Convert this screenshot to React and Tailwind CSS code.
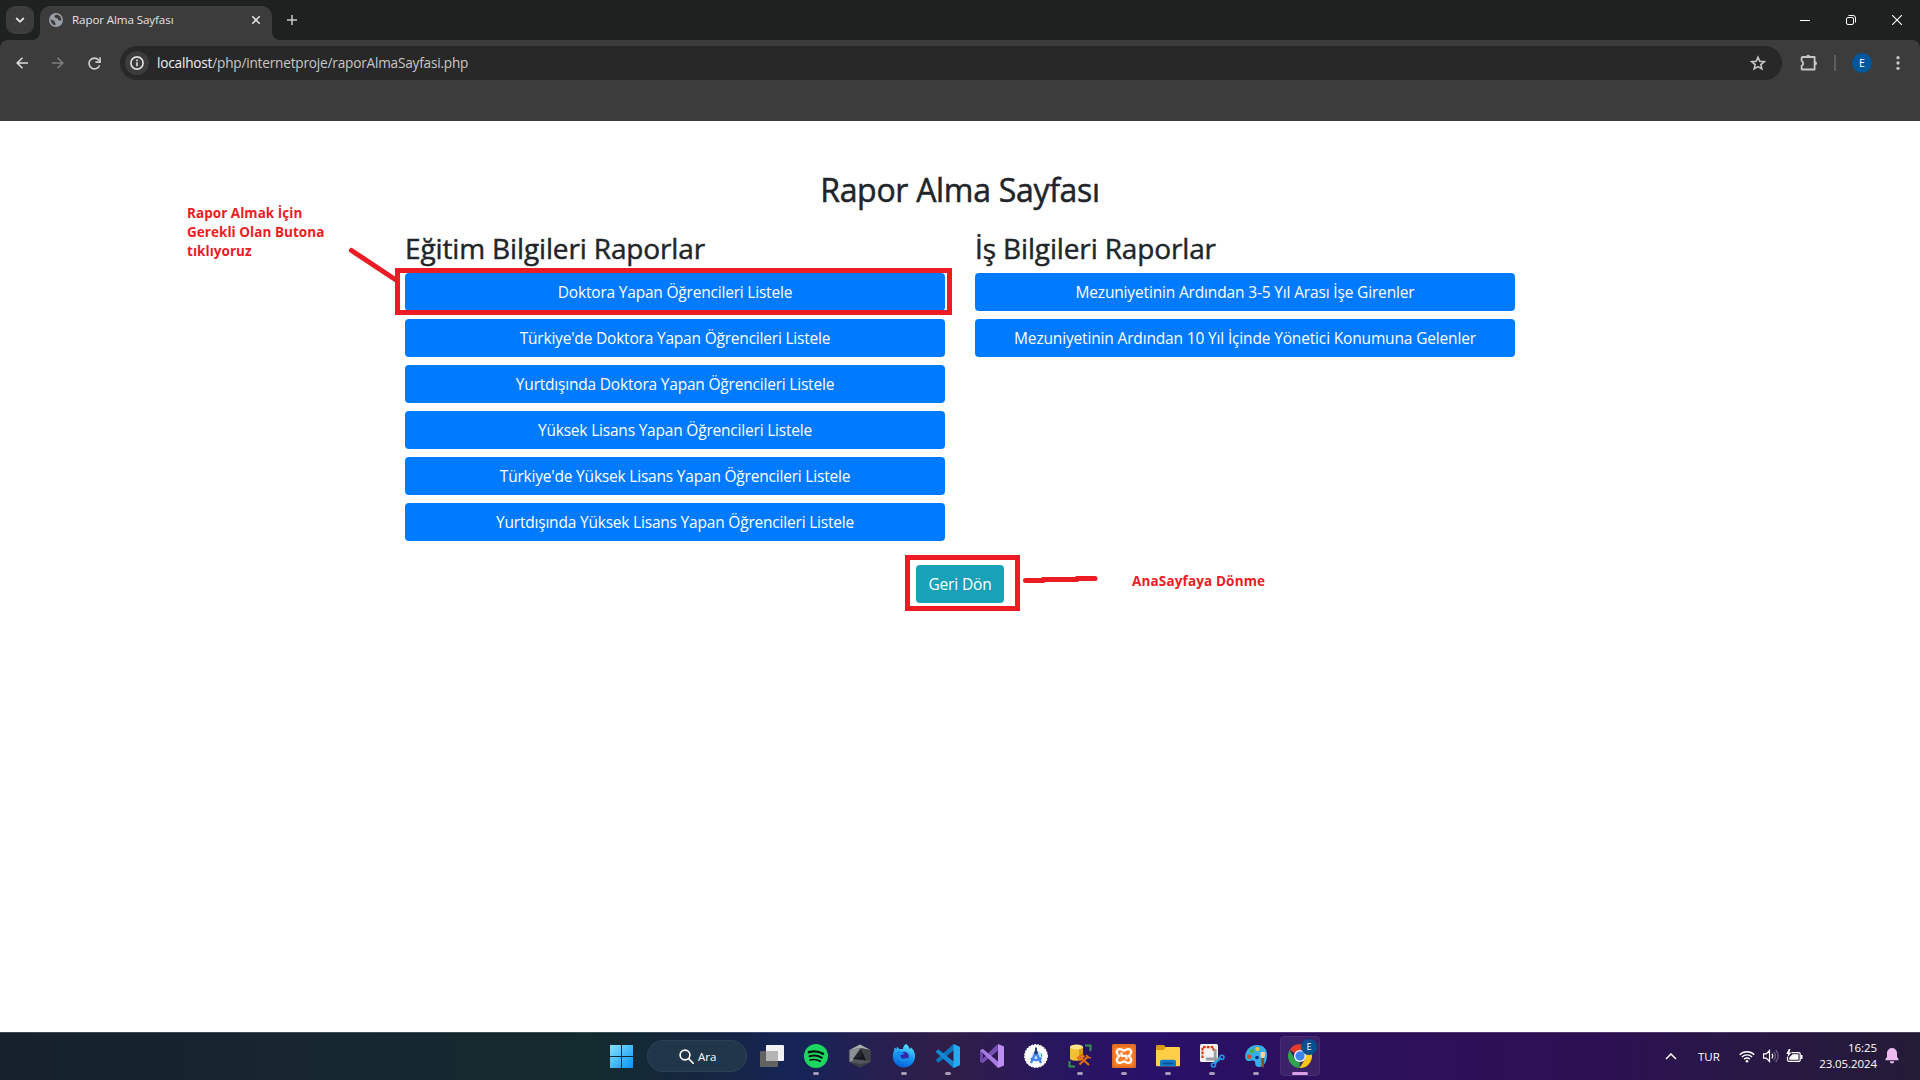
import React from 'react';

const educationReports = [
  'Doktora Yapan Öğrencileri Listele',
  "Türkiye'de Doktora Yapan Öğrencileri Listele",
  'Yurtdışında Doktora Yapan Öğrencileri Listele',
  'Yüksek Lisans Yapan Öğrencileri Listele',
  "Türkiye'de Yüksek Lisans Yapan Öğrencileri Listele",
  'Yurtdışında Yüksek Lisans Yapan Öğrencileri Listele',
];

const jobReports = [
  'Mezuniyetinin Ardından 3-5 Yıl Arası İşe Girenler',
  'Mezuniyetinin Ardından 10 Yıl İçinde Yönetici Konumuna Gelenler',
];

/* ---------- Browser chrome ---------- */

function TabStrip() {
  return (
    <div className="flex h-10 items-start bg-[#1f2120] pl-1.5 pt-1.5">
      <button className="flex size-7 items-center justify-center rounded-[9px] bg-[#3c3c3c]">
        <svg width="10" height="8" viewBox="0 0 10 8" fill="none" stroke="#e3e3e3" strokeWidth="1.8">
          <path d="M1.2 2 5 5.8 8.8 2" />
        </svg>
      </button>
      <div className="relative ml-1.5 flex h-[34px] w-[232px] items-center rounded-t-[10px] bg-[#3c3c3c] pb-1.5 pl-[9px] pr-2.5">
        <svg className="absolute -left-2 bottom-0" width="8" height="8" viewBox="0 0 8 8">
          <path d="M8 0v8H0A8 8 0 0 0 8 0Z" fill="#3c3c3c" />
        </svg>
        <svg className="absolute -right-2 bottom-0" width="8" height="8" viewBox="0 0 8 8">
          <path d="M0 0v8h8A8 8 0 0 1 0 0Z" fill="#3c3c3c" />
        </svg>
        <svg width="14" height="14" viewBox="0 0 14 14">
          <circle cx="7" cy="7" r="7" fill="#9aa0a8" />
          <path
            d="M1.6 6.2c1.2.9 2.6.9 3.6 1.500 1 .7.2 1.500.8 2 .8.6.6 1.300.4 2.600A5.500 5.500 0 0 1 1.600 6.200ZM7.600 1.500c-.9.7-2.200.7-2.300 1.600-.1.800.9.700.8 1.500 0 .8 1 .9 1.800.6.900-.3 1.200.5 1 1.100-.3.900.6 1.300 1.500 1.100.900-.2 1.300.4 2 .200A5.500 5.500 0 0 0 7.600 1.500Z"
            fill="#3c3c3c"
          />
        </svg>
        <span className="ml-[9px] flex-1 whitespace-nowrap text-[11.6px] leading-4 tracking-[-0.1px] text-[#e3e3e3]">
          Rapor Alma Sayfası
        </span>
        <svg width="12" height="12" viewBox="0 0 12 12" fill="none" stroke="#dedede" strokeWidth="1.600">
          <path d="m2.300 2.300 7.400 7.400M9.700 2.300 2.300 9.700" />
        </svg>
      </div>
      <svg className="ml-[15px] mt-[9px]" width="10" height="10" viewBox="0 0 10 10" fill="none" stroke="#c9c9c9" strokeWidth="1.500">
        <path d="M5 0v10M0 5h10" />
      </svg>
      <div className="ml-auto flex">
        <div className="flex h-7 w-[46px] items-center justify-center">
          <svg width="10" height="10" viewBox="0 0 10 10" stroke="#fff">
            <path d="M0 5.500h10" />
          </svg>
        </div>
        <div className="flex h-7 w-[46px] items-center justify-center">
          <svg width="10" height="10" viewBox="0 0 10 10" fill="none" stroke="#fff">
            <rect x=".5" y="2.500" width="7" height="7" rx="1.500" />
            <path d="M2.500.5h4.500a2.500 2.500 0 0 1 2.500 2.500v4.500" />
          </svg>
        </div>
        <div className="flex h-7 w-[46px] items-center justify-center">
          <svg width="10" height="10" viewBox="0 0 10 10" stroke="#fff" strokeWidth="1.100">
            <path d="m0 0 10 10M10 0 0 10" />
          </svg>
        </div>
      </div>
    </div>
  );
}

function Toolbar() {
  return (
    <div className="h-[81px] bg-[#1f2120]">
      <div className="flex h-full items-start rounded-t-lg bg-[#3c3c3c] pt-1.5">
        <div className="flex h-[34px] w-[120px] items-center pl-4">
          <svg width="12" height="12" viewBox="0 0 12 12" fill="none" stroke="#dcdcdc" strokeWidth="1.600">
            <path d="M12 6H1.500M6.500.700 1.200 6l5.300 5.300" />
          </svg>
          <svg className="ml-6" width="12" height="12" viewBox="0 0 12 12" fill="none" stroke="#7e7e7e" strokeWidth="1.600">
            <path d="M0 6h10.500M5.500.700 10.800 6l-5.300 5.300" />
          </svg>
          <svg className="ml-6" width="13" height="13" viewBox="0 0 13 13" fill="none" stroke="#cfcfcf" strokeWidth="1.600">
            <path d="M11.600 8.200A5.400 5.400 0 1 1 10.600 3L12 4.500" />
            <path d="M12.100.3v4.800H7.400" />
          </svg>
        </div>
        <div className="flex h-[34px] w-[1662px] items-center rounded-full bg-[#282828] pl-[5px] pr-4">
          <span className="flex size-6 items-center justify-center rounded-full bg-[#3c3c3c]">
            <svg width="14" height="14" viewBox="0 0 14 14" fill="none">
              <circle cx="7" cy="7" r="6.100" stroke="#e3e3e3" strokeWidth="1.600" />
              <path d="M7 6.300V10.300M7 3.600v1.600" stroke="#e3e3e3" strokeWidth="1.600" />
            </svg>
          </span>
          <span className="ml-2 flex-1 text-[13.6px] leading-5 tracking-[-0.19px] text-[#c7c7c7]">
            <span className="text-[#f0f0f0]">localhost</span>/php/internetproje/raporAlmaSayfasi.php
          </span>
          <svg width="16" height="16" viewBox="0 0 17 16" fill="none" stroke="#c7c7c7" strokeWidth="1.700">
            <path d="m8.500 1.900 1.900 4.300 4.700.4-3.600 3.100 1.100 4.600-4.100-2.500-4.100 2.500 1.100-4.600L1.900 6.600l4.700-.4Z" />
          </svg>
        </div>
        <div className="flex h-[34px] flex-1 items-center pl-[18px]">
          <svg width="18" height="18" viewBox="0 0 18 18" fill="none">
            <path
              d="M2.600 3h12v12.500H2a1 1 0 0 1-.4-.8v-2.800a2.700 2.700 0 0 0 0-4.900V4a1 1 0 0 1 1-1Z"
              stroke="#c7c7c7"
              strokeWidth="1.800"
              strokeLinejoin="round"
            />
            <path d="M6.200 2.800a2 2 0 0 1 4 0ZM15 7.200a2 2 0 0 1 0 4Z" fill="#c7c7c7" />
          </svg>
          <span className="ml-4 h-4 w-0.5 bg-[#5d5d5d]" />
          <span className="ml-4 flex size-5 items-center justify-center rounded-full bg-[#00579c] pt-px text-[10.500px] text-white">E</span>
          <svg className="ml-6" width="4" height="14" viewBox="0 0 4 14" fill="#c7c7c7">
            <circle cx="2" cy="1.700" r="1.650" />
            <circle cx="2" cy="7" r="1.650" />
            <circle cx="2" cy="12.300" r="1.650" />
          </svg>
        </div>
      </div>
    </div>
  );
}

/* ---------- Page content ---------- */

function ReportColumn({ title, reports, buttonTracking }) {
  return (
    <section className="flex w-[570px] flex-col px-[15px]">
      <h2 className="mb-2 text-[28px] leading-[34px] tracking-[-0.14px] text-[#212529] [-webkit-text-stroke:0.45px_#212529]">
        {title}
      </h2>
      <div className="flex flex-col gap-2">
        {reports.map((label) => (
          <button
            key={label}
            className={`h-[38px] rounded bg-[#007bff] text-[15.500px] leading-6 text-white ${buttonTracking}`}
          >
            {label}
          </button>
        ))}
      </div>
    </section>
  );
}

function Annotations() {
  return (
    <div className="pointer-events-none absolute inset-0 text-[13.500px] font-bold leading-[19px] tracking-[0.04px] text-[#ed1c24]">
      <div className="absolute left-[395px] top-[147px] h-[47px] w-[557px] border-[5px] border-[#ed1c24]" />
      <div className="absolute left-[905px] top-[434px] h-14 w-[115px] border-[5px] border-[#ed1c24]" />
      <p className="absolute left-[187px] top-[83px] whitespace-pre">{'Rapor Almak İçin\nGerekli Olan Butona\ntıklıyoruz'}</p>
      <p className="absolute left-[1132px] top-[451px] whitespace-nowrap tracking-[0.150px]">AnaSayfaya Dönme</p>
      <svg className="absolute left-[346px] top-[124px]" width="54" height="42" viewBox="0 0 54 42">
        <path d="M5.500 5.500 50 35" stroke="#ed1c24" strokeWidth="5" strokeLinecap="round" />
      </svg>
      <svg className="absolute left-[1022px] top-[452px]" width="78" height="14" viewBox="0 0 78 14">
        <path d="M3.500 7.500H21M21 6.500H55M55 5.500H73" stroke="#ed1c24" strokeWidth="5" strokeLinecap="round" />
      </svg>
    </div>
  );
}

function Page() {
  return (
    <main className="relative h-[911px] bg-white">
      <div className="mx-auto flex w-[1140px] flex-col items-center pt-[50px]">
        <h1 className="text-[32px] leading-[38px] tracking-[-0.3px] text-[#212529] [-webkit-text-stroke:0.5px_#212529]">
          Rapor Alma Sayfası
        </h1>
        <div className="mt-[22px] flex">
          <ReportColumn title="Eğitim Bilgileri Raporlar" reports={educationReports} buttonTracking="tracking-[-0.2px]" />
          <ReportColumn title="İş Bilgileri Raporlar" reports={jobReports} buttonTracking="tracking-[-0.16px]" />
        </div>
        <button className="mt-6 h-[38px] w-[88px] rounded bg-[#17a2b8] text-[15.500px] leading-6 tracking-[-0.16px] text-white">
          Geri Dön
        </button>
      </div>
      <Annotations />
    </main>
  );
}

/* ---------- Taskbar ---------- */

const WindowsIcon = () => (
  <svg className="-ml-0.5" width="23" height="23" viewBox="0 0 23 23">
    <defs>
      <linearGradient id="win" x1="0" y1="0" x2="1" y2="1">
        <stop offset="0" stopColor="#86e2fb" />
        <stop offset="1" stopColor="#0693f5" />
      </linearGradient>
    </defs>
    <path d="M0 0h11v11H0ZM12 0h11v11H12ZM0 12h11v11H0ZM12 12h11v11H12Z" fill="url(#win)" />
  </svg>
);

const TaskViewIcon = () => (
  <svg width="24" height="22" viewBox="0 0 24 22">
    <rect y="6" width="18" height="16" rx="1" fill="#626262" />
    <rect x="6" width="18" height="16" rx="1" fill="#f2f2f2" />
    <path d="M6 6h12v10H6Z" fill="#b4b4b4" />
  </svg>
);

const SpotifyIcon = () => (
  <svg width="24" height="24" viewBox="0 0 24 24" fill="none" stroke="#0b1210" strokeLinecap="round">
    <circle cx="12" cy="12" r="12" fill="#1ed760" stroke="none" />
    <path d="M4.800 8.200c4.800-1.400 10.200-.9 14.300 1.500" strokeWidth="2.300" />
    <path d="M5.500 12.300c4.200-1.200 8.600-.7 12.200 1.400" strokeWidth="2" />
    <path d="M6.100 16c3.600-.9 7.100-.5 10.200 1.300" strokeWidth="1.600" />
  </svg>
);

const HexIcon = () => (
  <svg width="24" height="24" viewBox="0 0 24 24">
    <path d="M12 .500 22.500 6v12L12 23.500 1.500 18V6Z" fill="#53575d" />
    <path d="M12 .500 22.500 6 12 4 1.500 6Z" fill="#a9adb1" />
    <path d="M1.500 18 12 23.500 22.500 18 12 20Z" fill="#3b3e45" />
    <path d="M1.500 6 12 4 4.500 17 1.500 18Z" fill="#8b9095" />
    <path d="M13 5 18.500 16.500 5 15Z" fill="#17181f" />
    <path d="m13 4 9.500 2v12L19 16.500Z" fill="#3f4248" />
    <path d="m13 5 1 7.500L5 15Z" fill="#25272d" />
  </svg>
);

const FirefoxIcon = () => (
  <svg width="24" height="24" viewBox="0 0 24 24">
    <defs>
      <linearGradient id="ff" x1=".7" y1="0" x2=".4" y2="1">
        <stop offset="0" stopColor="#5fe6f8" />
        <stop offset=".5" stopColor="#1a9cf5" />
        <stop offset="1" stopColor="#0560d8" />
      </linearGradient>
    </defs>
    <path
      d="M14 0c2 1.400 3.200 3.200 3.700 5 .8-.3 1-1 .9-1.700C21.700 5.500 23.500 9 23 13.500 22.300 19.300 17.600 23.500 12 23.500 5.600 23.500.8 18.500.8 12.500c0-2.600.6-4.600 1.500-6.300L2 3.400l2.600 1.700.3-2.400 2.900 2.500C9 4.800 10 4.900 11 5.100 11.100 3 12 1.200 14 0Z"
      fill="url(#ff)"
    />
    <circle cx="12" cy="12.500" r="4.800" fill="#3428a8" />
    <path d="M5 8c3-1 5 0 7.500 1.500-1 1.300-2.500 1.400-3.800 1.500C8 13 9.800 15.500 13 14.500c2.300-.8 3.500-.2 3.700.5-2.700 4-9 3.500-11-1.500Z" fill="#178df0" />
  </svg>
);

const VSCodeIcon = () => (
  <svg width="24" height="24" viewBox="0 0 24 24">
    <path d="m17.500 0 5.800 2.600a1.200 1.200 0 0 1 .7 1.100L17.500 6.500 3 18.300a1 1 0 0 1-1.300 0L.4 17a1 1 0 0 1 0-1.500Z" fill="#0b75bd" />
    <path d="m17.500 24 5.800-2.600a1.200 1.200 0 0 0 .7-1.100l-6.500-2.800L3 5.700a1 1 0 0 0-1.300 0L.4 7a1 1 0 0 0 0 1.500Z" fill="#1489d3" />
    <path d="M17.500 0 23.300 2.700a1.200 1.200 0 0 1 .7 1.100v16.400a1.200 1.200 0 0 1-.7 1.100L17.500 24Z" fill="#27a9f2" />
  </svg>
);

const VisualStudioIcon = () => (
  <svg width="24" height="24" viewBox="0 0 24 24">
    <path d="M0 6.300 3 5v14L0 17.700Z" fill="#6a48ac" />
    <path d="M17.500 0 18 6.500 3 19 0 17.700Z" fill="#7650b4" />
    <path d="M0 6.300 3 5l15 12.500V24Z" fill="#a77ae4" />
    <path d="M18 0 24 2.500v19L18 24Z" fill="#bd8ff2" />
  </svg>
);

const AndroidStudioIcon = () => (
  <svg width="24" height="24" viewBox="0 0 24 24" fill="none">
    <circle cx="12" cy="12" r="11.300" fill="#fff" />
    <circle cx="12" cy="12" r="11.300" stroke="#fff" strokeWidth="1.200" strokeDasharray="2 1" />
    <circle cx="13" cy="12.500" r="5.500" fill="#c9dcf8" />
    <path d="M11.800 8.500 7 19M12.200 8.500 17 19" stroke="#3f80ec" strokeWidth="2.300" />
    <path d="M6.500 14.300c3.500 2.200 7.500 2.200 11-.2" stroke="#3f80ec" strokeWidth="1.900" />
    <path d="M11 3.500h2V6l1 3-2 2-2-2 1-3Z" fill="#26406e" />
    <path d="m17 9 1.500 2.500-1.500 1.500Z" fill="#33b46c" />
  </svg>
);

const DatabaseIcon = () => (
  <svg width="24" height="24" viewBox="0 0 24 24" fill="none">
    <path d="M17 1.500h5.500V7M1.500 17v5.500H7" stroke="#33964b" strokeWidth="2" />
    <path d="M2 3v11.500c0 3 13 3 13 0V3Z" fill="#f2c133" />
    <path d="M11 5v11.300c2.500-.3 4-1 4-1.800V3Z" fill="#d69b18" />
    <ellipse cx="8.500" cy="3" rx="6.500" ry="2.500" fill="#ffe587" />
    <path d="m11.500 20.500 9-8.500M12 13l9 8" stroke="#e56b10" strokeWidth="2.200" />
    <path d="m9.500 14 4.500-3.500 2 2-4 3.500ZM18 11l2 2.500 3 .2" stroke="#e56b10" strokeWidth="1.600" />
  </svg>
);

const XamppIcon = () => (
  <svg width="24" height="24" viewBox="0 0 24 24" fill="none">
    <rect width="24" height="24" rx="1.500" fill="#e46f20" />
    <rect x="2" y="3" width="20" height="19" rx="3" fill="#fa7d28" />
    <path
      d="M6 10.800C3.500 7.500 5.500 4.300 9 5.300l3 1.500 3-1.500c3.500-1 5.500 2.200 3 5.500L16.800 12l1.200 1.200c2.500 3.300.5 6.500-3 5.500l-3-1.500-3 1.500c-3.500 1-5.500-2.200-3-5.500L7.200 12ZM9.500 9.300v2M14.500 12.500v2M9.500 11.800h5"
      stroke="#fff"
      strokeWidth="2.300"
      strokeLinejoin="round"
      strokeLinecap="round"
    />
  </svg>
);

const ExplorerIcon = () => (
  <svg width="24" height="24" viewBox="0 0 24 24">
    <path d="M0 2.300C0 1.500.6 1 1.300 1h6.500l2.700 2.500L8 7H0Z" fill="#d99a10" />
    <path d="M0 6h7.500l2.700-3h12.500c.8 0 1.300.6 1.300 1.300V21c0 .7-.5 1.300-1.300 1.300H1.300C.5 22.300 0 21.700 0 21Z" fill="#ffcf48" />
    <path d="M4 22.300v-4c0-1.700 1-2.500 2.500-2.500h11c1.500 0 2.500.8 2.500 2.500v4Z" fill="#1079c8" />
    <path d="M7.500 19.500h9" stroke="#084f8c" strokeWidth="1.500" strokeLinecap="round" />
  </svg>
);

const SnipIcon = () => (
  <svg width="25" height="25" viewBox="0 0 25 25" fill="none">
    <rect width="18" height="18" rx="1.500" fill="#f4f3f3" />
    <path d="M2.500 14V3.200h11V7" stroke="#d9390d" strokeWidth="2.200" strokeDasharray="2.600 1.200" />
    <path d="M15.200 5v14M6 15h14" stroke="#9a9fa5" strokeWidth="2.800" />
    <circle cx="13.500" cy="21" r="2" stroke="#199bea" strokeWidth="1.600" />
    <circle cx="22" cy="13.300" r="2" stroke="#199bea" strokeWidth="1.600" />
    <path d="m15 19.500 5-5" stroke="#199bea" strokeWidth="2" />
  </svg>
);

const PaintIcon = () => (
  <svg width="24" height="24" viewBox="0 0 24 24">
    <path
      d="M13 1C20 1 23.500 6 23 11.500c-.3 4-1 9.500-6.500 11.200-3.500.8-5.500-1-5.300-3.500.2-2.700-2-3-4.500-2.400C3 18 .8 15.500 1.200 11.800 2 5.500 6.500 1 13 1Z"
      fill="#35aeea"
    />
    <circle cx="5.200" cy="12.700" r="2.200" fill="#d84b20" />
    <circle cx="8" cy="7.200" r="2.100" fill="#4fb02c" />
    <circle cx="13.500" cy="5" r="2.100" fill="#f4c529" />
    <circle cx="13" cy="13.500" r="1.800" fill="#15317b" />
    <path d="M17.300 14h2.900l-.2 8.600c0 1.500-2.500 1.500-2.500 0Z" fill="#8a4d18" />
    <path d="M17.300 14c-1-2.500-1-4.500-.5-6h4c.6 1.800.5 3.700-.6 6Z" fill="#efd3a0" />
  </svg>
);

const ChromeIcon = () => (
  <svg width="30" height="30" viewBox="0 0 30 30">
    <path d="M12 6A12 12 0 0 1 22.400 12H12L6.800 15 1.600 12A12 12 0 0 1 12 6Z" fill="#e43e2b" />
    <path d="M1.600 12 6.800 21 12 24l-.6 6A12 12 0 0 1 1.600 12Z" fill="#2ea44f" />
    <path d="M22.400 12A12 12 0 0 1 11.400 30l5.800-9L18 15l-3-3Z" fill="#fbc516" />
    <circle cx="12" cy="18" r="6" fill="#fff" />
    <circle cx="12" cy="18" r="4.700" fill="#3d83ee" />
  </svg>
);

const apps = [
  { name: 'windows', Icon: WindowsIcon },
  { name: 'search' },
  { name: 'taskview', Icon: TaskViewIcon },
  { name: 'spotify', Icon: SpotifyIcon, running: true },
  { name: 'hex', Icon: HexIcon },
  { name: 'firefox', Icon: FirefoxIcon, running: true },
  { name: 'vscode', Icon: VSCodeIcon, running: true },
  { name: 'vs', Icon: VisualStudioIcon },
  { name: 'android', Icon: AndroidStudioIcon },
  { name: 'database', Icon: DatabaseIcon, running: true },
  { name: 'xampp', Icon: XamppIcon, running: true },
  { name: 'explorer', Icon: ExplorerIcon, running: true },
  { name: 'snip', Icon: SnipIcon, running: true },
  { name: 'paint', Icon: PaintIcon, running: true },
];

function Taskbar() {
  return (
    <footer className="flex h-12 items-center bg-[linear-gradient(90deg,#15202c_0px,#172630_300px,#142b2f_590px,#14263f_700px,#162458_800px,#271f4f_880px,#301e48_950px,#281660_1060px,#291069_1150px,#2c105c_1320px,#2d1053_1600px,#291747_1720px,#241b36_1920px)] pl-[600px] text-[11.500px] text-white shadow-[inset_0_1px_0_rgba(255,255,255,0.18)]">
      {apps.map(({ name, Icon, running }) =>
        Icon ? (
          <div key={name} className="relative flex h-12 w-11 items-center justify-center">
            <Icon />
            {running && <span className="absolute bottom-[5px] h-[3px] w-1.5 rounded-full bg-[#a69bb8]" />}
          </div>
        ) : (
          <div
            key={name}
            className="mx-[3px] flex h-8 w-[100px] items-center rounded-full border border-white/5 bg-[#22364a] pl-[31px]"
          >
            <svg width="15" height="15" viewBox="0 0 15 15" fill="none" stroke="#fff" strokeWidth="1.600">
              <circle cx="6" cy="6" r="4.900" />
              <path d="m9.600 9.600 4.600 4.600" strokeLinecap="round" />
            </svg>
            <span className="ml-1 mt-0.5">Ara</span>
          </div>
        ),
      )}
      <div className="relative ml-0.5 size-10 rounded border border-white/5 bg-white/8">
        <div className="absolute left-[7px] top-[1px]">
          <ChromeIcon />
        </div>
        <span className="absolute left-5 top-0.5 flex size-4 items-center justify-center rounded-full bg-[#00518f] text-[9px]">E</span>
        <span className="absolute bottom-0 left-[11px] h-[3px] w-4 rounded-full bg-[#dc9fe6]" />
      </div>
      <div className="ml-auto flex h-full items-center pr-[21px]">
        <svg width="12" height="7" viewBox="0 0 12 7" fill="none" stroke="#fff" strokeWidth="1.500">
          <path d="M1 6 6 1l5 5" />
        </svg>
        <span className="ml-[21px] mt-0.5 w-[22px]">TUR</span>
        <svg className="ml-[19px]" width="16" height="13" viewBox="0 0 16 13" fill="none" stroke="#fff" strokeWidth="1.300">
          <path d="M.7 4.800a10.300 10.300 0 0 1 14.600 0M2.900 7a7.200 7.200 0 0 1 10.200 0M5.100 9.200a4.100 4.100 0 0 1 5.800 0" />
          <circle cx="8" cy="11.300" r="1.300" fill="#fff" stroke="none" />
        </svg>
        <svg className="ml-2" width="16" height="14" viewBox="0 0 16 14" fill="none" stroke="#fff" strokeWidth="1.200">
          <path d="M.6 4.800h2.700L6.500 1.500v11L3.300 9.200H.6ZM8.800 4.800a3 3 0 0 1 0 4.400" />
          <path d="M10.700 2.800a6 6 0 0 1 0 8.400M12.700 1a8.500 8.500 0 0 1 0 12" stroke="#6f6682" />
        </svg>
        <svg className="ml-[7px] mr-px" width="17" height="14" viewBox="0 0 17 14" fill="none">
          <path d="M5.500 3.600h7.200a1.500 1.500 0 0 1 1.500 1.500v5.800a1.500 1.500 0 0 1-1.500 1.500H3a1.500 1.500 0 0 1-1.500-1.500V8" stroke="#fff" strokeWidth="1.200" />
          <path d="M6.500 5.300h6v5.400H3.300V8.500ZM14.800 6h1.700v4h-1.700ZM2.800 0 .3 5h2L1.200 8.500 5.500 3.600H3.300L4.500 0Z" fill="#fff" />
        </svg>
        <div className="ml-[15px] w-[58px] text-right leading-4 tracking-[-0.08px]">
          <div>16:25</div>
          <div>23.05.2024</div>
        </div>
        <svg className="ml-2" width="14" height="16" viewBox="0 0 14 16" fill="#edbbf2">
          <path d="M7 0a5 5 0 0 1 5 5v3.800l1.600 2.600a.6.6 0 0 1-.5.900H.900a.6.6 0 0 1-.5-.900L2 8.800V5a5 5 0 0 1 5-5ZM4.800 13.300h4.400a2.200 2.200 0 0 1-4.400 0Z" />
        </svg>
      </div>
    </footer>
  );
}

export default function App() {
  return (
    <div className="flex h-[1080px] w-[1920px] flex-col overflow-hidden font-['Open_Sans','Noto_Sans',sans-serif]">
      <TabStrip />
      <Toolbar />
      <Page />
      <Taskbar />
    </div>
  );
}
